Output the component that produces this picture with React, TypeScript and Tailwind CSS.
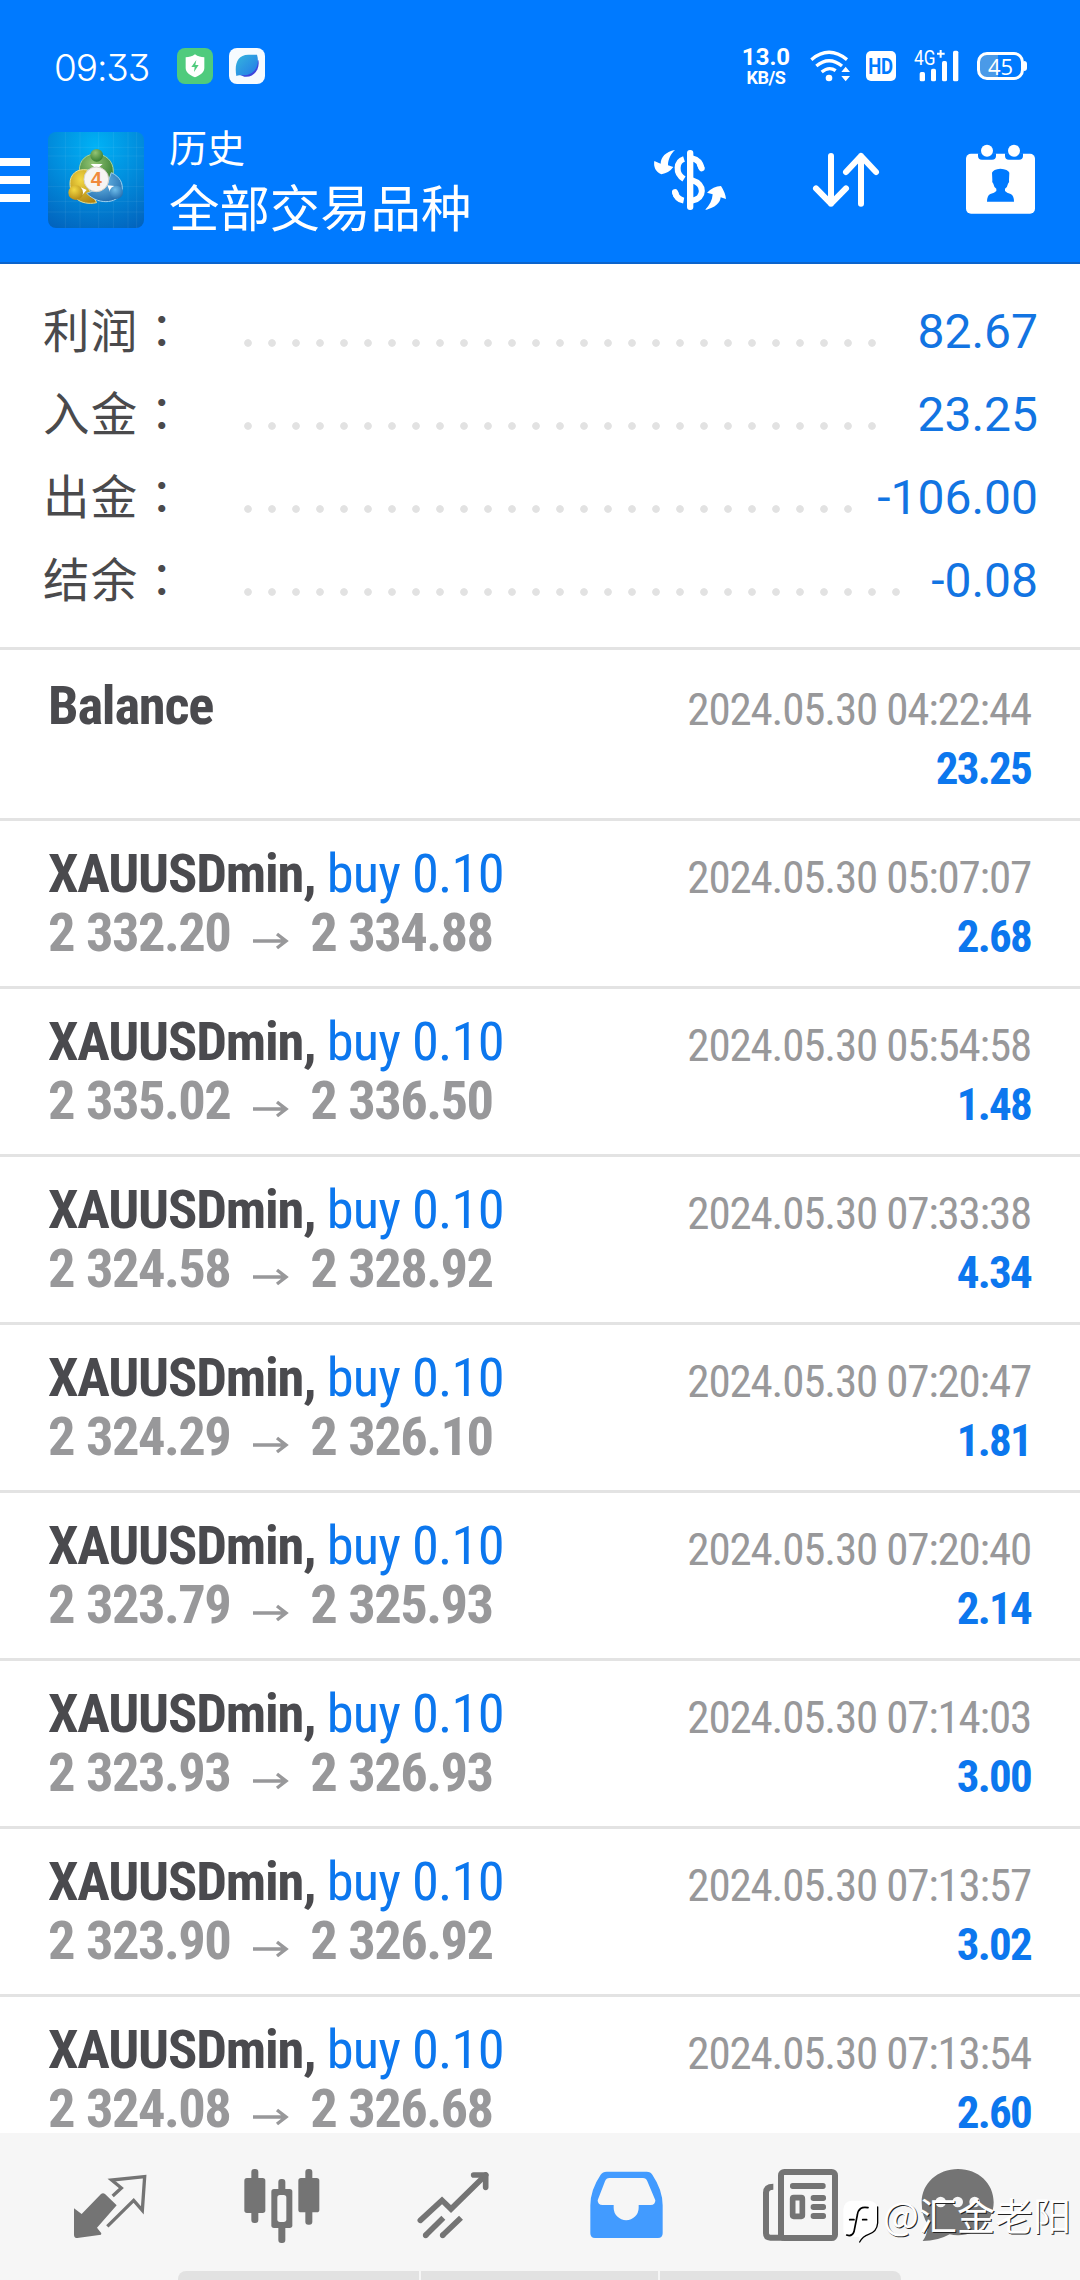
import { ReactNode } from "react";

const summary = [
  { label: "利润", value: "82.67", dots: 27 },
  { label: "入金", value: "23.25", dots: 27 },
  { label: "出金", value: "-106.00", dots: 26 },
  { label: "结余", value: "-0.08", dots: 28 },
];

const deals = [
  { from: "2 332.20", to: "2 334.88", time: "2024.05.30 05:07:07", profit: "2.68" },
  { from: "2 335.02", to: "2 336.50", time: "2024.05.30 05:54:58", profit: "1.48" },
  { from: "2 324.58", to: "2 328.92", time: "2024.05.30 07:33:38", profit: "4.34" },
  { from: "2 324.29", to: "2 326.10", time: "2024.05.30 07:20:47", profit: "1.81" },
  { from: "2 323.79", to: "2 325.93", time: "2024.05.30 07:20:40", profit: "2.14" },
  { from: "2 323.93", to: "2 326.93", time: "2024.05.30 07:14:03", profit: "3.00" },
  { from: "2 323.90", to: "2 326.92", time: "2024.05.30 07:13:57", profit: "3.02" },
  { from: "2 324.08", to: "2 326.68", time: "2024.05.30 07:13:54", profit: "2.60" },
];

const StatusBar = () => (
  <div className="flex h-[132px] items-start pl-[54px] text-white">
    <span className="mt-[45px] w-[123px] text-[37px] leading-[46px] tracking-[-1.1px] [font-family:Inter,sans-serif] [font-weight:350] [font-feature-settings:'cv09']">
      09:33
    </span>
    <svg className="mt-[48px] h-9 w-9" viewBox="0 0 108 108">
      <rect width="108" height="108" rx="24" fill="#4fcb7d" />
      <path d="M54 19c9 7 18 9 28 9v32c0 13-12 21-28 28c-16-7-28-15-28-28V28c10 0 19-2 28-9z" fill="#fff" />
      <path d="M58 36L43 57h10l-2 15L65 51H55z" fill="#4fcb7d" />
    </svg>
    <svg className="mt-[48px] ml-4 h-9 w-9" viewBox="0 0 108 108">
      <defs>
        <linearGradient id="leaf" x1="0" y1="0" x2="1" y2="1">
          <stop offset="0" stopColor="#35b6dd" />
          <stop offset="1" stopColor="#2378e8" />
        </linearGradient>
      </defs>
      <rect width="108" height="108" rx="24" fill="#f6fbff" />
      <path d="M88 36c6 28-14 54-42 50l-12-5z" fill="#3d45dc" />
      <path d="M22 84c-6-34 2-64 36-64h26c10 34-8 62-42 62c-8 0-14 0-20 2z" fill="url(#leaf)" />
    </svg>

    <div className="mt-[47px] ml-[475px] flex w-[52px] flex-col items-center font-bold [font-family:Roboto,sans-serif]">
      <span className="text-[24px] leading-[21px]">13.0</span>
      <span className="text-[18px] leading-[19px] tracking-[-0.4px]">KB/S</span>
    </div>
    <svg className="mt-[50px] ml-[18px] h-8 w-10" viewBox="267 90 120 96" fill="none" stroke="#fff" strokeWidth="10">
      <path d="M271 119Q324 75 378 119" />
      <path d="M286 138Q324 106 363 138" />
      <path d="M302 156Q324 138 344 152" />
      <circle cx="324" cy="174" r="10" fill="#fff" stroke="none" />
      <path d="M361 156l13-16l13 16zM361 168l13 16l13-16z" fill="#fff" stroke="none" />
    </svg>
    <div className="mt-[51px] ml-[16px] h-[30px] w-[30px] rounded-[5px] bg-white text-center text-[22px] leading-[31px] font-bold tracking-[-0.5px] text-[#007aff] [font-family:Roboto,sans-serif]">
      <span className="inline-block origin-center -translate-x-[1px] scale-x-[.84]">HD</span>
    </div>
    <div className="relative mt-[50px] ml-[18px] h-[32px] w-[46px]">
      <svg className="h-[32px] w-[46px]" viewBox="579 90 138 96" fill="#fff">
        <rect x="596" y="156" width="16" height="28" rx="5" />
        <rect x="630" y="146" width="15" height="38" rx="5" />
        <rect x="663" y="123" width="15" height="61" rx="5" />
        <rect x="696" y="92" width="16" height="92" rx="5" />
        <path d="M648 98h8v-8h6v8h9v6h-9v9h-6v-9h-8z" />
      </svg>
      <span className="absolute -top-[2px] left-0 origin-left scale-x-[.82] text-[21px] leading-[20px] [font-family:Roboto,sans-serif]">4G</span>
    </div>
    <div className="mt-[52px] ml-[17px] flex items-center">
      <div className="flex h-[28px] w-[47px] items-center justify-center rounded-[10px] border-[3px] border-white bg-gradient-to-r from-[#4a9ae8] from-45% to-[#007aff] to-45% text-[22px] leading-[22px] [font-family:'Open_Sans',sans-serif]">
        45
      </div>
      <div className="h-[10px] w-[3px] rounded-r bg-white" />
    </div>
  </div>
);

const AppLogo = () => (
  <svg className="ml-[18px] h-24 w-24" viewBox="144 336 288 288">
    <defs>
      <radialGradient id="sky" cx=".5" cy=".15" r=".95">
        <stop offset="0" stopColor="#00b2f6" />
        <stop offset=".5" stopColor="#018cdc" />
        <stop offset="1" stopColor="#0263bd" />
      </radialGradient>
      <radialGradient id="green" cx=".4" cy=".3" r=".8">
        <stop offset="0" stopColor="#93c474" />
        <stop offset="1" stopColor="#2c7529" />
      </radialGradient>
      <radialGradient id="gold" cx=".4" cy=".3" r=".8">
        <stop offset="0" stopColor="#f3d944" />
        <stop offset="1" stopColor="#ad8010" />
      </radialGradient>
      <radialGradient id="blue" cx=".4" cy=".3" r=".8">
        <stop offset="0" stopColor="#6fbdea" />
        <stop offset="1" stopColor="#1c65a8" />
      </radialGradient>
    </defs>
    <rect x="144" y="336" width="288" height="288" rx="24" fill="url(#sky)" />
    <g stroke="#fff" strokeOpacity=".1" strokeWidth="2">
      <path d="M196 336v288M240 336v288M296 336v288M340 336v288M384 336v288M410 336v288" />
      <path d="M144 382h288M144 408h288M144 448h288M144 500h288M144 544h288M144 576h288" />
    </g>
    <path d="M238 452c0-34 22-50 50-50s52 20 52 52c0 20-8 34-14 42l-38-50z" fill="url(#green)" stroke="#a9d39a" strokeWidth="3" />
    <path d="M262 450c-32-6-52 14-52 40c0 40 30 68 80 58l-30-52z" fill="url(#gold)" stroke="#efe08a" strokeWidth="3" />
    <path d="M334 458c26 12 36 32 32 54c-6 36-66 48-106 8l60-22z" fill="url(#blue)" stroke="#9fd2f0" strokeWidth="3" />
    <path d="M272 432h36l-18 16zM242 502l18 8l-16 18zM322 496l22 2l-14 18z" fill="#fff" />
    <circle cx="290" cy="406" r="19" fill="url(#green)" />
    <circle cx="227" cy="518" r="22" fill="url(#gold)" />
    <circle cx="349" cy="517" r="20" fill="url(#blue)" />
    <circle cx="289" cy="478" r="37" fill="#f7f5f2" stroke="#d5d2cc" strokeWidth="3" />
    <text x="289" y="499" textAnchor="middle" fontSize="60" fontWeight="700" fill="#f08a3c" fontFamily="Liberation Sans, sans-serif">
      4
    </text>
  </svg>
);

const Header = () => (
  <header className="h-[264px] border-b-2 border-[#0b64cc] bg-[#007aff]">
    <StatusBar />
    <div className="flex h-24 items-center">
      <div className="flex w-[30px] flex-col gap-[10px]">
        <div className="h-2 bg-white" />
        <div className="h-2 bg-white" />
        <div className="h-2 bg-white" />
      </div>
      <AppLogo />
      <div className="mb-2 ml-[25px] flex flex-col text-white [font-family:'Noto_Sans_CJK_SC',sans-serif]">
        <span className="text-[38px] leading-[60px]">历史</span>
        <span className="text-[50.4px] leading-[60px]">全部交易品种</span>
      </div>
      <svg className="ml-auto h-[66px] w-[75px]" viewBox="39 51 225 198" fill="none" stroke="#fff">
        <rect x="141" y="60" width="19" height="180" rx="9" fill="#fff" stroke="none" />
        <path d="M132 87C109 94 104 130 132 147" strokeWidth="18" />
        <path d="M157 85Q180 90 185 115M105 186Q110 208 131 212" strokeWidth="18" />
        <path d="M180 105l5 10M105 186l3 9" strokeWidth="18" strokeLinecap="round" />
        <path d="M157 151C195 162 195 204 157 212" strokeWidth="18" />
        <path d="M105 60C76 65 63 82 62 101L43 93C40 110 47 126 64 133Q87 129 100 111L84 106C84 88 92 72 105 60z" fill="#fff" stroke="none" />
        <path d="M195 240C226 234 241 218 242 202L258 207Q256 188 243 168Q220 169 201 188L218 193C217 211 209 226 195 240z" fill="#fff" stroke="none" />
      </svg>
      <svg className="ml-[82px] h-[60px] w-[72px]" viewBox="270 390 216 180" fill="none" stroke="#fff" strokeWidth="18" strokeLinecap="round" strokeLinejoin="round">
        <path d="M333 408V551M288 505L333 551L378 505" />
        <path d="M423 551V408M378 456L423 408L468 456" />
      </svg>
      <svg className="mr-[42px] ml-[81px] h-[72px] w-[75px]" viewBox="729 370 225 216">
        <rect x="738" y="399" width="207" height="180" rx="15" fill="#fff" />
        <path d="M774 398v8q0 11 12 11h30q12 0 12-11v-8zM855 398v8q0 11 12 11h30q12 0 12-11v-8z" fill="#007aff" />
        <circle cx="801" cy="390" r="18" fill="#fff" />
        <circle cx="882" cy="390" r="18" fill="#fff" />
        <path
          d="M816 456Q820 446 841 444Q864 446 868 456L867 478Q869 486 864 489Q862 500 855 504V511Q860 517 872 520Q882 525 882 543H801Q801 525 811 520Q824 517 829 511V504Q822 500 820 489Q815 486 817 478z"
          fill="#007aff"
        />
      </svg>
    </div>
  </header>
);

const Summary = () => (
  <section className="h-[386px] border-b-[3px] border-[#e3e3e3] pt-[26px] pr-[42px] pl-[43px]">
    {summary.map((row) => (
      <div key={row.label} className="flex h-[83px] items-baseline">
        <span className="w-[193px] text-[46.5px] leading-none tracking-[1.3px] text-[#4a4a4c] [font-family:'Noto_Sans_CJK_SC',sans-serif]">
          {row.label}
          <span className="[font-family:'Noto_Sans_CJK_TC',sans-serif]">：</span>
        </span>
        <div
          className="mt-[49px] h-2 self-start bg-[radial-gradient(circle_at_center,#e2e2e2_3.4px,transparent_4.2px)] bg-[length:24px_8px]"
          style={{ width: row.dots * 24 }}
        />
        <span className="ml-auto text-[48px] leading-[83px] text-[#1274e2] [font-family:Roboto,sans-serif]">{row.value}</span>
      </div>
    ))}
  </section>
);

const condensed = "[font-family:'Roboto_Condensed',Roboto,sans-serif] [font-stretch:75%]";

type RowProps = { title: ReactNode; prices?: ReactNode; time: string; profit: string; first?: boolean };

const Row = ({ title, prices, time, profit, first }: RowProps) => (
  <div
    className={`flex shrink-0 justify-between border-b-[3px] border-[#e3e3e3] pr-[49px] pl-12 whitespace-nowrap ${condensed} ${
      first ? "h-[171px] pt-[26px]" : "h-[168px] pt-[23px]"
    }`}
  >
    <div className="text-[54.5px] leading-[59px]">
      <div className="font-bold tracking-[-1.2px] text-[#4a4a4e]">{title}</div>
      <div className="flex font-bold tracking-[-1.55px] text-[#98989a] [word-spacing:1px]">{prices}</div>
    </div>
    <div className="pt-1 text-right text-[45px] leading-[59px]">
      <div className="tracking-[-1.18px] text-[#98989a]">{time}</div>
      <div className="font-bold tracking-[-1.75px] text-[#0c77ee]">{profit}</div>
    </div>
  </div>
);

const Arrow = () => (
  <svg className="mt-[29px] mr-[21px] ml-[23px] h-[18px] w-[36px]" viewBox="0 0 36 18" fill="none" stroke="#98989a" strokeWidth="3.4">
    <path d="M0 9H33M24 2L33 9L24 16" />
  </svg>
);

const NavIcon = ({ box, children }: { box: string; children: ReactNode }) => (
  <div className="flex flex-1 justify-center">
    <svg className="h-[90px] w-[90px] overflow-visible" viewBox={box} fill="#747474">
      {children}
    </svg>
  </div>
);

const BottomNav = () => (
  <nav className="relative h-[147px] bg-[#f6f6f6]">
    <div className="flex pt-[27px] pr-[26px] pl-6">
      <NavIcon box="195 120 270 270">
        <path d="M222 265L245 282L303 222Q309 217 315 222L350 256L291 323L304 340L303 344L232 354Q222 354 222 344z" />
        <path d="M338 228L364 204L335 180L434 170L427 271L401 241L322 319" fill="none" stroke="#747474" strokeWidth="10" />
      </NavIcon>
      <NavIcon box="710 120 270 270">
        <rect x="753" y="147" width="21" height="162" rx="9" />
        <rect x="732" y="174" width="63" height="105" rx="8" />
        <rect x="915" y="147" width="21" height="167" rx="9" />
        <rect x="894" y="174" width="63" height="103" rx="8" />
        <rect x="834" y="177" width="21" height="192" rx="9" />
        <rect x="813" y="207" width="63" height="117" rx="8" />
        <rect x="831" y="225" width="27" height="81" rx="8" fill="#f6f6f6" />
      </NavIcon>
      <NavIcon box="145 120 270 270">
        <g fill="none" stroke="#747474" strokeWidth="17">
          <path d="M182 301L247 241L274 267L378 165" strokeLinecap="round" />
          <path d="M342 165H378V202" strokeLinecap="round" strokeLinejoin="round" />
          <path d="M198 346L251 293M249 346L304 293" />
          <path d="M198 346h.1M249 346h.1" strokeLinecap="round" />
        </g>
      </NavIcon>
      <NavIcon box="660 120 270 270">
        <path
          fillRule="evenodd"
          fill="#429bff"
          d="M740 155H860Q872 155 877 164Q908 210 908 256V340Q908 354 894 354H705Q691 354 691 340V256Q691 210 722 164Q728 155 740 155zM748 174Q739 174 735 184L713 241Q713 255 728 255H761V263A37 37 0 0 0 836 263V255H872Q886 255 886 241L862 184Q858 174 849 174z"
        />
      </NavIcon>
      <NavIcon box="95 120 270 270">
        <rect x="182" y="156" width="162" height="198" rx="10" fill="none" stroke="#747474" strokeWidth="18" />
        <path d="M159 200Q137 200 137 218V340Q137 353 150 353H190" fill="none" stroke="#747474" strokeWidth="18" />
        <rect x="209" y="189" width="107" height="18" rx="8" />
        <rect x="217" y="233" width="29" height="56" rx="3" fill="none" stroke="#747474" strokeWidth="17" />
        <rect x="271" y="225" width="46" height="18" rx="8" />
        <rect x="271" y="252" width="46" height="18" rx="8" />
        <rect x="271" y="279" width="46" height="18" rx="8" />
      </NavIcon>
      <NavIcon box="610 120 270 270">
        <path d="M715 147C776 147 822 190 822 247C822 304 776 346 715 346Q701 346 690 343Q655 363 609 363Q621 349 626 316Q606 288 606 247C606 190 654 147 715 147z" />
        <circle cx="663" cy="246" r="16" fill="#f6f6f6" />
        <circle cx="714" cy="246" r="16" fill="#f6f6f6" />
        <circle cx="765" cy="246" r="16" fill="#f6f6f6" />
      </NavIcon>
    </div>
    <div className="absolute bottom-0 left-[178px] flex h-[9px] w-[723px] gap-[2px] overflow-hidden rounded-t-[8px]">
      <div className="w-[241px] bg-[#e2e2e2]" />
      <div className="w-[237px] bg-[#e2e2e2]" />
      <div className="flex-1 bg-[#e2e2e2]" />
    </div>
    {/* author mark floating over the tab bar */}
    <div className="absolute top-[58px] left-[842px] flex items-start text-white">
      <svg className="mt-[8px] h-[46px] w-[38px]" viewBox="36 58 114 138" fill="none" strokeLinecap="round">
        <path d="M64 63H118Q144 66 144 92V130Q142 158 116 166L88 188V172H56Q40 170 40 150V90Q42 64 64 63z" fill="#fff" />
        <path d="M59 120H72M114 84Q86 78 82 106L72 156Q66 172 50 166M98 120H110" stroke="#000" strokeWidth="5" />
        <path d="M143 82V130Q141 156 116 164Q98 170 89 187" stroke="#000" strokeWidth="4" />
      </svg>
      <span className="ml-[3px] text-[38px] leading-[46px] [font-family:'Noto_Sans_CJK_SC',sans-serif] [text-shadow:1px_1px_0_#222]">@汇金老阳</span>
    </div>
  </nav>
);

export default function App() {
  return (
    <div className="flex h-[2280px] w-[1080px] flex-col overflow-hidden bg-white">
      <Header />
      <Summary />
      <main className="flex h-[1483px] flex-col overflow-hidden">
        <Row first title="Balance" time="2024.05.30 04:22:44" profit="23.25" />
        {deals.map((deal) => (
          <Row
            key={deal.time}
            title={
              <>
                XAUUSDmin, <span className="font-normal tracking-[-0.8px] text-[#0c77ee]">buy 0.10</span>
              </>
            }
            prices={
              <>
                {deal.from}
                <Arrow />
                {deal.to}
              </>
            }
            time={deal.time}
            profit={deal.profit}
          />
        ))}
      </main>
      <BottomNav />
    </div>
  );
}
